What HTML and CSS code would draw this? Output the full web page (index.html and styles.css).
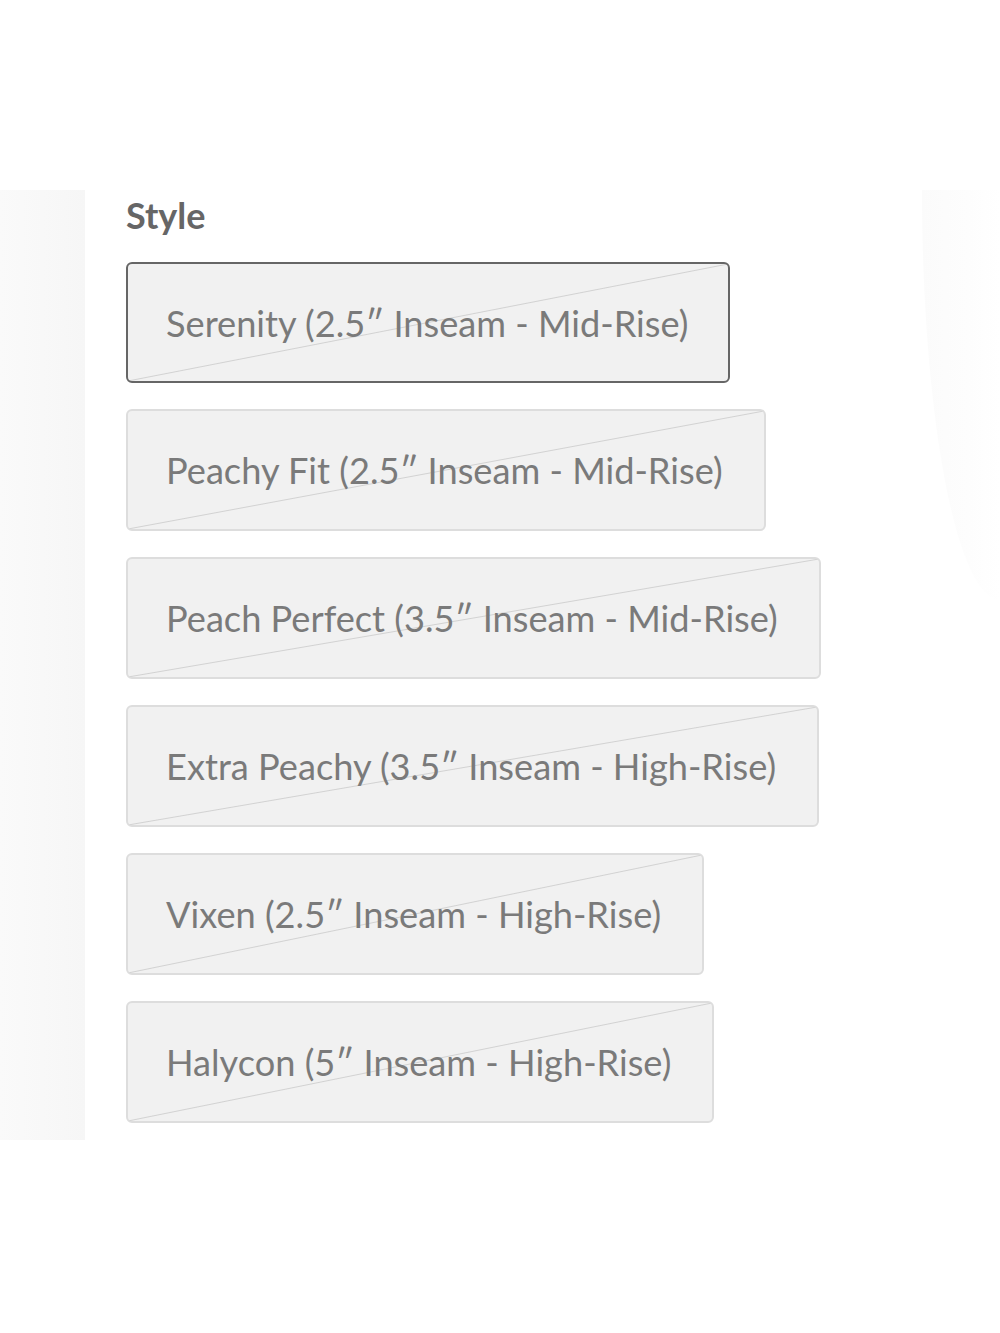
FILE: index.html
```html
<!DOCTYPE html>
<html lang="en">
<head>
    <meta charset="UTF-8">
    <meta name="viewport" content="width=device-width, initial-scale=1.0">
    <title>Style</title>
    <link rel="stylesheet" href="styles.css">
</head>
<body>
    <div class="page">
        <div class="side-panel"></div>

        <div class="picker">
            <h2>Style</h2>
            <div class="options">
                <button class="option selected">Serenity (2.5″ Inseam - Mid-Rise)</button>
                <button class="option">Peachy Fit (2.5″ Inseam - Mid-Rise)</button>
                <button class="option">Peach Perfect (3.5″ Inseam - Mid-Rise)</button>
                <button class="option">Extra Peachy (3.5″ Inseam - High-Rise)</button>
                <button class="option">Vixen (2.5″ Inseam - High-Rise)</button>
                <button class="option">Halycon (5″ Inseam - High-Rise)</button>
            </div>
        </div>

        <div class="side-shade"></div>
    </div>
</body>
</html>
```

FILE: styles.css
```css
body {
    margin: 0;
    background: #fff;
    font-family: Lato, "Open Sans", sans-serif;
}
.page {
    display: flex;
    align-items: flex-start;
    padding-top: 190px;
    min-height: 1143px;
}
.side-panel {
    width: 85px;
    height: 950px;
    background: linear-gradient(to right, #fafafa, #f6f6f6);
    flex-shrink: 0;
}
.picker {
    flex: 1;
    padding-left: 41px;
}
.picker h2 {
    margin: 5px 0 27px;
    font-size: 36px;
    font-weight: 700;
    color: #666;
    line-height: 40px;
}
.options {
    display: flex;
    flex-direction: column;
    align-items: flex-start;
    gap: 26px;
}
.option {
    height: 122px;
    padding: 0 41px 0 38px;
    border: 2px solid #ddd;
    border-radius: 6px;
    background-color: #f1f1f1;
    background-image: linear-gradient(to bottom right, transparent calc(50% - 1px), #d2d2d2 50%, transparent calc(50% + 1px));
    font-family: inherit;
    font-size: 36.2px;
    color: #7a7a7a;
    white-space: nowrap;
    cursor: pointer;
}
.option.selected {
    border-color: #666;
    height: 121px;
    padding-right: 40px;
}
.side-shade {
    width: 78px;
    height: 410px;
    background: linear-gradient(to right, #fbfbfb, #fdfdfd 60%, #fff);
    border-radius: 0 0 0 100%;
    flex-shrink: 0;
}
```
